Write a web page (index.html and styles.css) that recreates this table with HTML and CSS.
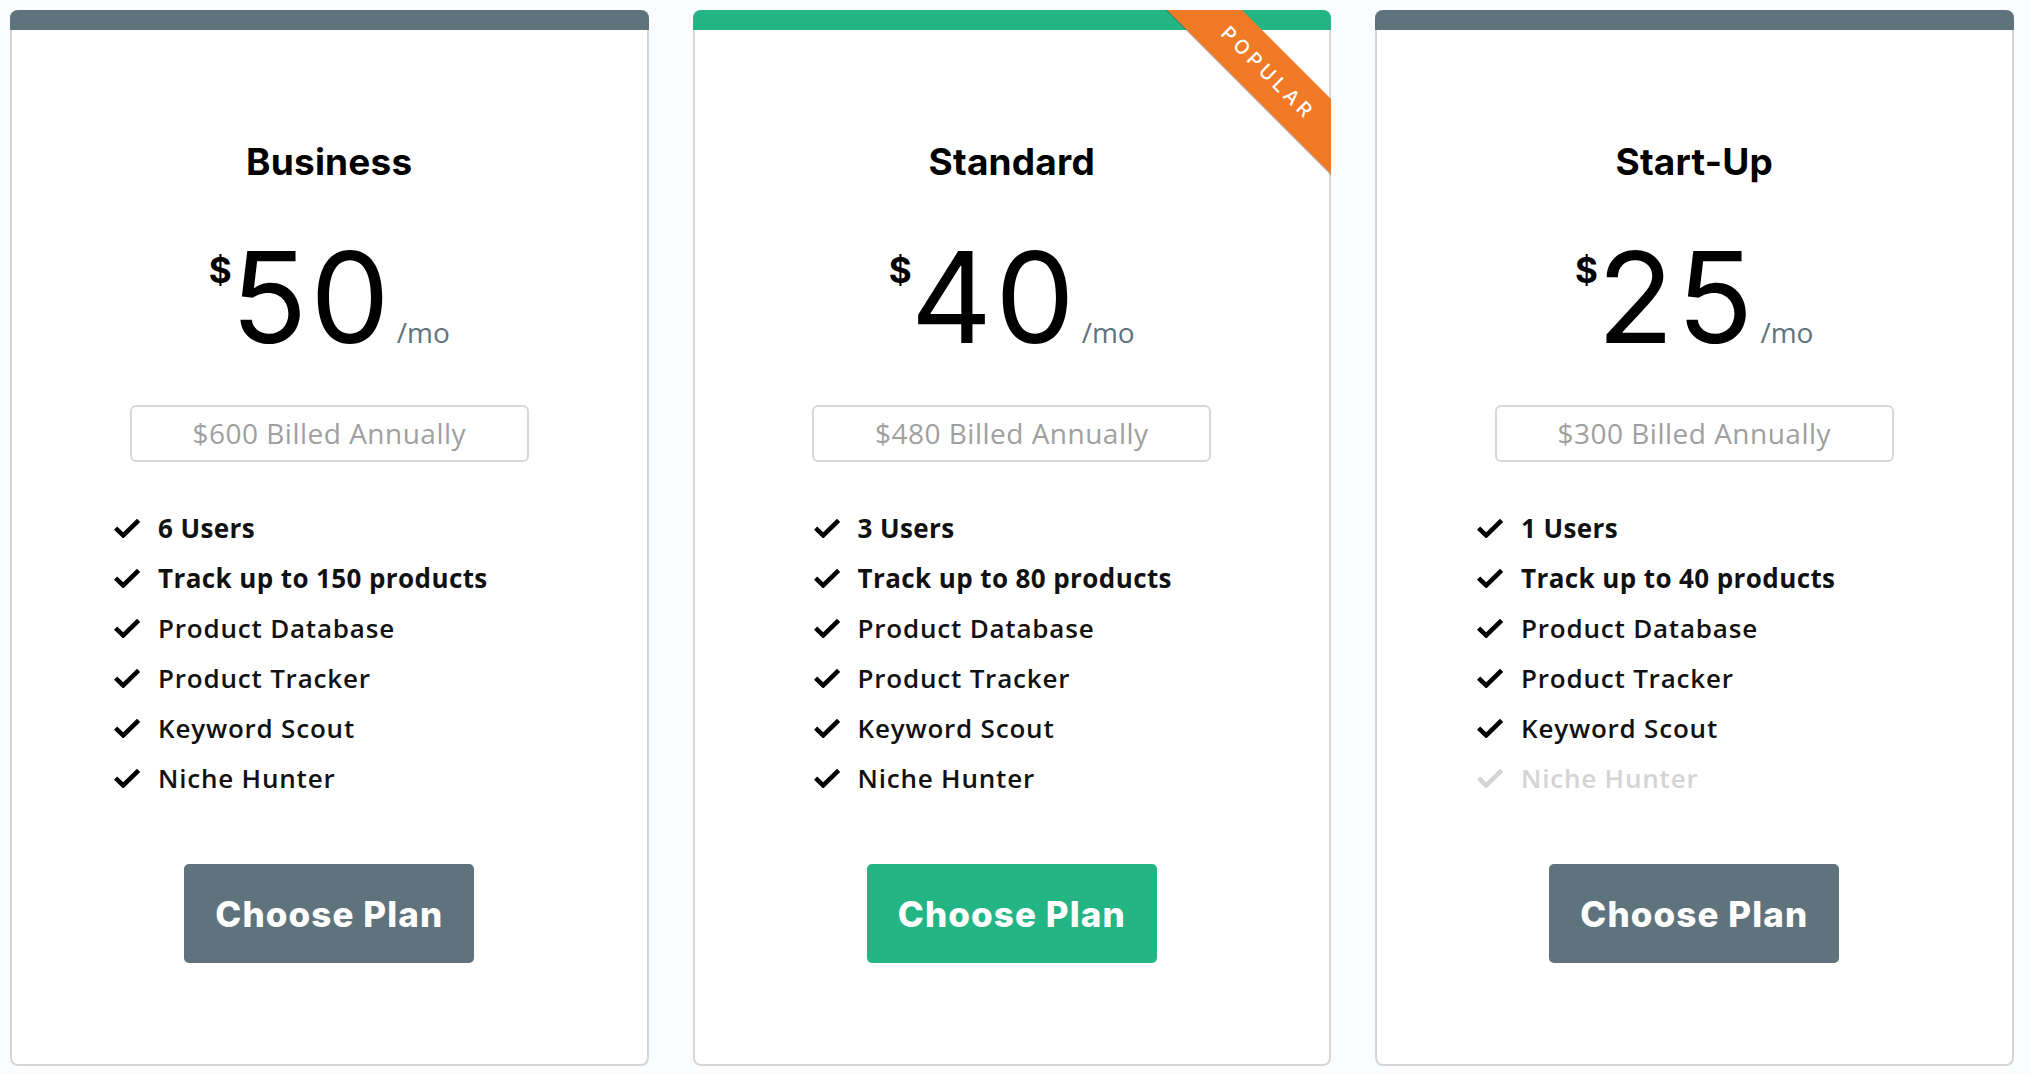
FILE: index.html
```html
<!DOCTYPE html>
<html lang="en">
<head>
<meta charset="utf-8">
<title>Pricing</title>
<link rel="stylesheet" href="styles.css">
</head>
<body>
<svg width="0" height="0" class="defs" aria-hidden="true">
  <symbol id="chk" viewBox="0 0 28 20">
    <path d="M2.6 10.2 L10.2 17.4 L25.6 2.4" fill="none" stroke="currentColor" stroke-width="4.6" stroke-linejoin="miter" stroke-linecap="butt"/>
  </symbol>
</svg>
<main class="plans">
  <section class="card">
    <div class="bar bar-gray"></div>
    <h2 class="title">Business</h2>
    <div class="price"><span class="cur">$</span><span class="amt">50</span><span class="per">/mo</span></div>
    <div class="billed">$600 Billed Annually</div>
    <ul class="features f-1">
      <li class="strong"><svg class="ic"><use href="#chk"/></svg>6 Users</li>
      <li class="strong"><svg class="ic"><use href="#chk"/></svg>Track up to 150 products</li>
      <li><svg class="ic"><use href="#chk"/></svg>Product Database</li>
      <li><svg class="ic"><use href="#chk"/></svg>Product Tracker</li>
      <li><svg class="ic"><use href="#chk"/></svg>Keyword Scout</li>
      <li><svg class="ic"><use href="#chk"/></svg>Niche Hunter</li>
    </ul>
    <a class="btn btn-gray" href="#">Choose Plan</a>
  </section>

  <section class="card">
    <div class="bar bar-green"></div>
    <div class="ribbon-clip"><div class="ribbon">POPULAR</div></div>
    <h2 class="title">Standard</h2>
    <div class="price"><span class="cur">$</span><span class="amt">40</span><span class="per">/mo</span></div>
    <div class="billed">$480 Billed Annually</div>
    <ul class="features f-2">
      <li class="strong"><svg class="ic"><use href="#chk"/></svg>3 Users</li>
      <li class="strong"><svg class="ic"><use href="#chk"/></svg>Track up to 80 products</li>
      <li><svg class="ic"><use href="#chk"/></svg>Product Database</li>
      <li><svg class="ic"><use href="#chk"/></svg>Product Tracker</li>
      <li><svg class="ic"><use href="#chk"/></svg>Keyword Scout</li>
      <li><svg class="ic"><use href="#chk"/></svg>Niche Hunter</li>
    </ul>
    <a class="btn btn-green" href="#">Choose Plan</a>
  </section>

  <section class="card">
    <div class="bar bar-gray"></div>
    <h2 class="title">Start-Up</h2>
    <div class="price"><span class="cur">$</span><span class="amt">25</span><span class="per">/mo</span></div>
    <div class="billed">$300 Billed Annually</div>
    <ul class="features f-3">
      <li class="strong"><svg class="ic"><use href="#chk"/></svg>1 Users</li>
      <li class="strong"><svg class="ic"><use href="#chk"/></svg>Track up to 40 products</li>
      <li><svg class="ic"><use href="#chk"/></svg>Product Database</li>
      <li><svg class="ic"><use href="#chk"/></svg>Product Tracker</li>
      <li><svg class="ic"><use href="#chk"/></svg>Keyword Scout</li>
      <li class="off"><svg class="ic"><use href="#chk"/></svg>Niche Hunter</li>
    </ul>
    <a class="btn btn-gray" href="#">Choose Plan</a>
  </section>
</main>
</body>
</html>
```
FILE: styles.css
```css
html, body {
  margin: 0;
  padding: 0;
  background: #fbfcfe;
}

.defs {
  position: absolute;
  width: 0;
  height: 0;
  overflow: hidden;
}

.plans {
  display: flex;
  gap: 44px;
  padding: 10px 16px 8px 10px;
  align-items: flex-start;
}

.card {
  position: relative;
  flex: 0 0 638.5px;
  box-sizing: border-box;
  background: #ffffff;
  border: 2px solid #d6d6d6;
  border-top: 0;
  border-radius: 8px;
  padding: 0 0 101px;
  display: flex;
  flex-direction: column;
  align-items: center;
  font-family: "Inter", "Liberation Sans", sans-serif;
  color: #000;
}

.bar {
  align-self: stretch;
  height: 20px;
  margin: 0 -2px;
  border-radius: 8px 8px 0 0;
}
.bar-gray { background: #5f737c; }
.bar-green { background: #23b584; }

.ribbon-clip {
  position: absolute;
  top: 0;
  right: -2px;
  width: 200px;
  height: 200px;
  overflow: hidden;
  border-top-right-radius: 8px;
}

.ribbon {
  position: absolute;
  left: 16.75px;
  top: 36.75px;
  width: 240px;
  height: 53px;
  background: #f07a26;
  color: #ffffff;
  transform: rotate(45deg);
  font-family: "Inter", "Liberation Sans", sans-serif;
  font-size: 19.5px;
  font-weight: 500;
  letter-spacing: 4.5px;
  line-height: 53px;
  text-align: center;
  box-shadow: 0 1px 0 rgba(60, 60, 60, 0.35);
}

.title {
  margin: 109px 0 0;
  font-size: 37px;
  line-height: 45px;
  font-weight: 700;
  letter-spacing: 0.2px;
}

.price {
  margin-top: 50px;
  display: flex;
  justify-content: center;
  align-items: baseline;
}

.cur {
  align-self: flex-start;
  margin-top: 19px;
  margin-right: -1px;
  font-size: 35px;
  font-weight: 700;
  line-height: 1;
}

.amt {
  font-size: 126px;
  font-weight: 400;
  line-height: 1;
  letter-spacing: 3px;
}

.per {
  margin-left: 4px;
  font-family: "Open Sans", "Liberation Sans", sans-serif;
  font-size: 28px;
  line-height: 1;
  color: #5f737c;
}

.billed {
  margin-top: 45px;
  box-sizing: border-box;
  width: 399px;
  height: 57px;
  border: 2px solid #d8d8d8;
  border-radius: 6px;
  text-align: center;
  font-family: "Open Sans", "Liberation Sans", sans-serif;
  font-size: 28px;
  letter-spacing: 0.5px;
  line-height: 53px;
  color: #a0a0a0;
}

.features {
  align-self: stretch;
  list-style: none;
  margin: 41px 0 0;
  padding: 0;
  font-family: "Open Sans", "Liberation Sans", sans-serif;
  font-size: 26px;
  font-weight: 600;
  letter-spacing: 0.8px;
  color: #111;
}
.f-1 { padding-left: 101px; }
.f-2 { padding-left: 118px; }
.f-3 { padding-left: 99px; }

.features li {
  display: flex;
  align-items: center;
  height: 50px;
}

.features .strong {
  font-weight: 700;
  letter-spacing: 0.4px;
}
.features .off { color: #d4d4d4; }

.ic {
  flex: 0 0 28px;
  width: 28px;
  height: 20px;
  margin-right: 17px;
  color: #000;
}
.off .ic { color: #d4d4d4; }

.btn {
  margin-top: 61px;
  box-sizing: border-box;
  width: 290px;
  height: 99px;
  border-radius: 5px;
  display: flex;
  align-items: center;
  justify-content: center;
  color: #ffffff;
  text-decoration: none;
  font-family: "Inter", "Liberation Sans", sans-serif;
  font-size: 35px;
  font-weight: 800;
  letter-spacing: 1.1px;
}
.btn-gray { background: #5f737c; }
.btn-green { background: #23b584; }
```
